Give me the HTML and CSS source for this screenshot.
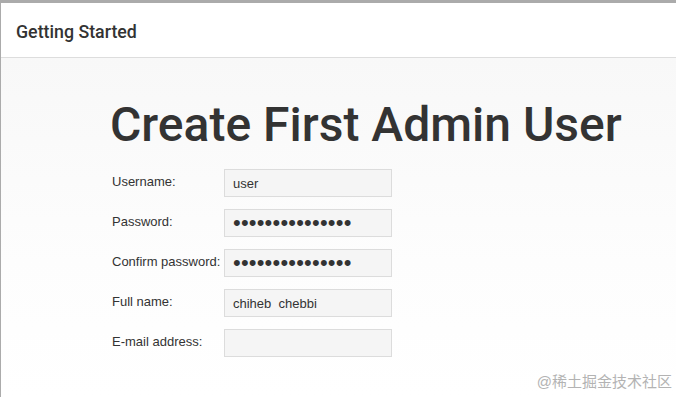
FILE: index.html
```html
<!DOCTYPE html>
<html lang="en">
<head>
    <meta charset="UTF-8">
    <meta name="viewport" content="width=device-width, initial-scale=1.0">
    <title>Getting Started</title>
    <link rel="stylesheet" href="styles.css">
</head>
<body>
    <div class="frame">
        <header class="header">Getting Started</header>

        <main class="content">
            <h1 class="page-title">Create First Admin User</h1>
            <form class="admin-form">
                <div class="form-row">
                    <label for="username">Username:</label>
                    <input id="username" type="text" value="user">
                </div>
                <div class="form-row">
                    <label for="password1">Password:</label>
                    <input id="password1" type="password" value="adminpassword12">
                </div>
                <div class="form-row">
                    <label for="password2">Confirm password:</label>
                    <input id="password2" type="password" value="adminpassword12">
                </div>
                <div class="form-row">
                    <label for="fullname">Full name:</label>
                    <input id="fullname" type="text" value="chiheb  chebbi">
                </div>
                <div class="form-row">
                    <label for="email">E-mail address:</label>
                    <input id="email" type="text" value="">
                </div>
            </form>
        </main>

        <div class="watermark">@稀土掘金技术社区</div>
    </div>
</body>
</html>
```

FILE: styles.css
```css
* {
    margin: 0;
    padding: 0;
    box-sizing: border-box;
}

:root {
    --text: #333333;
    --frame: #ababab;
    --line: #dddddd;
    --field-bg: #f5f5f5;
    --field-border: #dcdcdc;
}

body {
    background: #ffffff;
    color: var(--text);
    font-family: 'Liberation Sans', Arial, sans-serif;
}

.frame {
    position: relative;
    height: 397px;
    border-top: 3px solid var(--frame);
    border-left: 1px solid var(--frame);
    display: flex;
    flex-direction: column;
    overflow: hidden;
}

.header {
    height: 55px;
    padding: 2px 15px 0;
    display: flex;
    align-items: center;
    font-family: Roboto, 'Noto Sans', sans-serif;
    font-size: 17.8px;
    font-weight: 500;
    color: #333;
    background: #ffffff;
    border-bottom: 1px solid var(--line);
    flex-shrink: 0;
}

.content {
    flex: 1;
    padding: 42px 0 0 109px;
    background: linear-gradient(to bottom, #f8f8f8 0%, #fdfdfd 60%, #ffffff 100%);
}

.page-title {
    font-family: Roboto, 'Noto Sans', sans-serif;
    font-size: 48px;
    line-height: 49px;
    font-weight: 500;
    color: #333;
    margin-bottom: 20px;
}

.admin-form {
    display: flex;
    flex-direction: column;
    gap: 12px;
    padding-left: 2px;
}

.form-row {
    display: flex;
    align-items: flex-start;
}

.form-row label {
    width: 112px;
    padding-top: 5px;
    font-size: 13px;
    line-height: 15px;
    color: #333;
}

.form-row input {
    width: 168px;
    height: 28px;
    padding: 0 8px;
    background: var(--field-bg);
    border: 1px solid var(--field-border);
    font-family: 'Liberation Sans', Arial, sans-serif;
    font-size: 13px;
    color: #333;
    outline: none;
}

.form-row input[type="password"] {
    font-size: 22px;
    letter-spacing: 0.2px;
    color: #333;
}

.watermark {
    position: absolute;
    right: 4px;
    bottom: 6px;
    font-family: 'Liberation Sans', 'Noto Sans CJK SC', sans-serif;
    font-size: 15px;
    color: #b3b3b3;
}
```
